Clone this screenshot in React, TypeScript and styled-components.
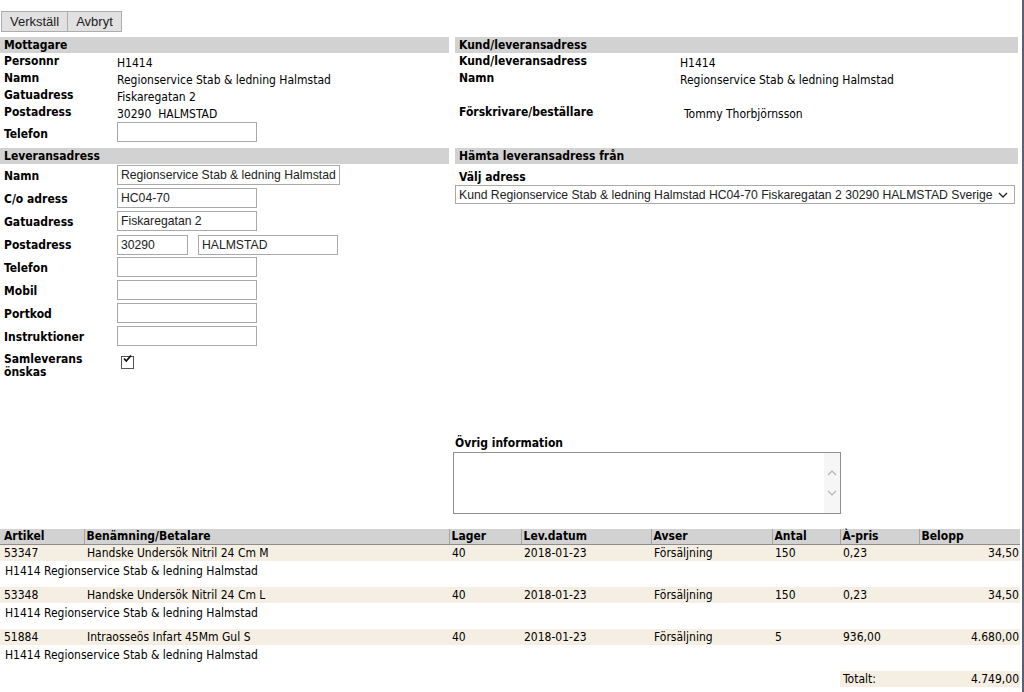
import styled, { createGlobalStyle } from 'styled-components';

const GlobalStyle = createGlobalStyle`
  html, body {
    margin: 0;
    padding: 0;
    background: #ffffff;
  }
  body {
    font-family: "DejaVu Sans Condensed", "DejaVu Sans", Tahoma, sans-serif;
    font-size: 12px;
    color: #000000;
  }
`;

const mottagare = [
  ['Personnr', 'H1414'],
  ['Namn', 'Regionservice Stab & ledning Halmstad'],
  ['Gatuadress', 'Fiskaregatan 2'],
  ['Postadress', '30290  HALMSTAD'],
];

const items = [
  { art: '53347', name: 'Handske Undersök Nitril 24 Cm M', lager: '40', datum: '2018-01-23', avser: 'Försäljning', antal: '150', pris: '0,23', belopp: '34,50' },
  { art: '53348', name: 'Handske Undersök Nitril 24 Cm L', lager: '40', datum: '2018-01-23', avser: 'Försäljning', antal: '150', pris: '0,23', belopp: '34,50' },
  { art: '51884', name: 'Intraosseös Infart 45Mm Gul S', lager: '40', datum: '2018-01-23', avser: 'Försäljning', antal: '5', pris: '936,00', belopp: '4.680,00' },
];

const columns = [
  { title: 'Artikel', width: 84 },
  { title: 'Benämning/Betalare', width: 365 },
  { title: 'Lager', width: 72 },
  { title: 'Lev.datum', width: 130 },
  { title: 'Avser', width: 121 },
  { title: 'Antal', width: 68 },
  { title: 'À-pris', width: 79 },
  { title: 'Belopp', width: 101 },
];

export default function App() {
  return (
    <Page>
      <GlobalStyle />
      <Toolbar>
        <Button>Verkställ</Button>
        <Button>Avbryt</Button>
      </Toolbar>

      <Columns>
        <Section>
          <SectionHead>Mottagare</SectionHead>
          <InfoGrid $label={117}>
            {mottagare.map(([label, value]) => (
              <InfoRow key={label}>
                <Label>{label}</Label>
                <Value>{value}</Value>
              </InfoRow>
            ))}
            <PhoneRow>
              <Label>Telefon</Label>
              <Input $w={140} />
            </PhoneRow>
          </InfoGrid>
        </Section>

        <Section>
          <SectionHead>Kund/leveransadress</SectionHead>
          <InfoGrid $label={225}>
            <InfoRow>
              <Label>Kund/leveransadress</Label>
              <Value>H1414</Value>
            </InfoRow>
            <InfoRow>
              <Label>Namn</Label>
              <Value>Regionservice Stab &amp; ledning Halmstad</Value>
            </InfoRow>
            <InfoRow>
              <Label />
              <Value />
            </InfoRow>
            <InfoRow>
              <Label>Förskrivare/beställare</Label>
              <Value $indent>Tommy Thorbjörnsson</Value>
            </InfoRow>
          </InfoGrid>
        </Section>

        <Section>
          <SectionHead>Leveransadress</SectionHead>
          <InfoGrid $label={117}>
            <FieldRow>
              <Label>Namn</Label>
              <Input $w={223} defaultValue="Regionservice Stab & ledning Halmstad" />
            </FieldRow>
            <FieldRow>
              <Label>C/o adress</Label>
              <Input $w={140} defaultValue="HC04-70" />
            </FieldRow>
            <FieldRow>
              <Label>Gatuadress</Label>
              <Input $w={140} defaultValue="Fiskaregatan 2" />
            </FieldRow>
            <FieldRow>
              <Label>Postadress</Label>
              <Pair>
                <Input $w={71} defaultValue="30290" />
                <Input $w={140} defaultValue="HALMSTAD" />
              </Pair>
            </FieldRow>
            <FieldRow>
              <Label>Telefon</Label>
              <Input $w={140} />
            </FieldRow>
            <FieldRow>
              <Label>Mobil</Label>
              <Input $w={140} />
            </FieldRow>
            <FieldRow>
              <Label>Portkod</Label>
              <Input $w={140} />
            </FieldRow>
            <FieldRow>
              <Label>Instruktioner</Label>
              <Input $w={140} />
            </FieldRow>
            <CheckRow>
              <Label $wrap>Samleverans önskas</Label>
              <CheckBox>
                <CheckInput type="checkbox" defaultChecked />
                <svg width="13" height="13" viewBox="0 0 13 13">
                  <path d="M3 6.5 L5.3 9 L10 3.5" fill="none" stroke="#111" strokeWidth="1.8" />
                </svg>
              </CheckBox>
            </CheckRow>
          </InfoGrid>
        </Section>

        <Section>
          <SectionHead>Hämta leveransadress från</SectionHead>
          <Stack>
            <Label>Välj adress</Label>
            <SelectWrap>
              <Select defaultValue="kund">
                <option value="kund">
                  Kund Regionservice Stab &amp; ledning Halmstad HC04-70 Fiskaregatan 2 30290 HALMSTAD Sverige
                </option>
              </Select>
              <svg width="10" height="6" viewBox="0 0 10 6">
                <path d="M1 1 L5 5 L9 1" fill="none" stroke="#222" strokeWidth="1.3" />
              </svg>
            </SelectWrap>
          </Stack>
        </Section>

        <Section />
        <OtherInfo>
          <Label>Övrig information</Label>
          <TextAreaWrap>
            <TextArea />
            <ScrollTrack>
              <svg width="10" height="6" viewBox="0 0 10 6">
                <path d="M1 5 L5 1 L9 5" fill="none" stroke="#b4b4b4" strokeWidth="1.2" />
              </svg>
              <svg width="10" height="6" viewBox="0 0 10 6">
                <path d="M1 1 L5 5 L9 1" fill="none" stroke="#b4b4b4" strokeWidth="1.2" />
              </svg>
            </ScrollTrack>
          </TextAreaWrap>
        </OtherInfo>
      </Columns>

      <Table>
        <colgroup>
          {columns.map((c) => (
            <col key={c.title} style={{ width: c.width }} />
          ))}
        </colgroup>
        <thead>
          <tr>
            {columns.map((c) => (
              <Th key={c.title}>{c.title}</Th>
            ))}
          </tr>
        </thead>
        <tbody>
          {items.map((it) => (
            <ItemGroup key={it.art}>
              <MainRow>
                <Td>{it.art}</Td>
                <Td>{it.name}</Td>
                <Td>{it.lager}</Td>
                <Td>{it.datum}</Td>
                <Td>{it.avser}</Td>
                <Td>{it.antal}</Td>
                <Td>{it.pris}</Td>
                <Td $right>{it.belopp}</Td>
              </MainRow>
              <tr>
                <PayerCell colSpan={8}>H1414 Regionservice Stab &amp; ledning Halmstad</PayerCell>
              </tr>
            </ItemGroup>
          ))}
          <tr>
            <Td colSpan={6} />
            <TotalCell>Totalt:</TotalCell>
            <TotalCell $right>4.749,00</TotalCell>
          </tr>
        </tbody>
      </Table>
    </Page>
  );
}

function ItemGroup({ children }: { children: React.ReactNode }) {
  return <>{children}</>;
}

const Page = styled.div`
  width: 1024px;
  min-height: 692px;
  box-sizing: border-box;
  border-right: 2px solid #5d6070;
  padding-top: 11px;
`;

const Toolbar = styled.div`
  display: flex;
  padding-left: 1px;
`;

const Button = styled.button`
  height: 21px;
  padding: 0 8px;
  margin: 0;
  margin-right: -1px;
  background: #e1e1e1;
  border: 1px solid #adadad;
  border-radius: 0;
  font-family: "Liberation Sans", Arial, sans-serif;
  font-size: 13px;
  color: #222;
`;

const Columns = styled.div`
  display: grid;
  grid-template-columns: 449px 563px;
  column-gap: 6px;
  margin-top: 5px;
  align-items: start;
`;

const Section = styled.div`
  display: flex;
  flex-direction: column;
`;

const SectionHead = styled.div`
  height: 16px;
  line-height: 16px;
  background: #d2d2d2;
  padding-left: 4px;
  font-weight: bold;
  font-size: 12px;
`;

const InfoGrid = styled.div<{ $label: number }>`
  display: grid;
  grid-template-columns: ${(p) => p.$label}px 1fr;
  padding-top: 1px;
`;

const InfoRow = styled.div`
  display: contents;
  & > * {
    height: 17px;
    line-height: 18px;
  }
`;

const FieldRow = styled.div`
  display: contents;
  & > * {
    height: 23px;
    display: flex;
    align-items: flex-start;
    padding-top: 1px;
    box-sizing: border-box;
  }
  & > ${() => Label} {
    line-height: 20px;
  }
`;

const PhoneRow = styled.div`
  display: contents;
  & > * {
    height: 26px;
    display: flex;
    align-items: flex-start;
    padding-top: 2px;
    box-sizing: border-box;
  }
  & > ${() => Label} {
    line-height: 20px;
  }
`;

const CheckRow = styled.div`
  display: contents;
  & > * {
    padding-top: 4px;
    height: 30px;
  }
`;

const Label = styled.div<{ $wrap?: boolean }>`
  padding-left: 4px;
  font-weight: bold;
  white-space: ${(p) => (p.$wrap ? 'normal' : 'nowrap')};
  line-height: ${(p) => (p.$wrap ? '13px' : 'inherit')};
  width: ${(p) => (p.$wrap ? '90px' : 'auto')};
`;

const Value = styled.div<{ $indent?: boolean }>`
  padding-left: ${(p) => (p.$indent ? 4 : 0)}px;
  white-space: pre;
`;

const Input = styled.input<{ $w: number }>`
  box-sizing: border-box;
  width: ${(p) => p.$w}px;
  height: 20px;
  margin: 0;
  padding: 0 3px;
  border: 1px solid #a9a9a9;
  border-radius: 0;
  font-family: "Liberation Sans", Arial, sans-serif;
  font-size: 12.2px;
  color: #222;
  outline: none;
`;

const Pair = styled.div`
  display: flex;
  gap: 10px;
`;

const CheckBox = styled.span`
  position: relative;
  width: 13px;
  height: 13px;
  margin-left: 4px;
  margin-top: 3px;
  svg {
    position: absolute;
    left: 0;
    top: 0;
    pointer-events: none;
  }
`;

const CheckInput = styled.input`
  appearance: none;
  box-sizing: border-box;
  width: 13px;
  height: 13px;
  margin: 0;
  border: 1px solid #555;
  background: #fff;
  display: block;
`;

const Stack = styled.div`
  display: flex;
  flex-direction: column;
  padding-top: 5px;
  ${Label} {
    line-height: 16px;
    height: 16px;
    margin-bottom: 0;
  }
`;

const SelectWrap = styled.div`
  position: relative;
  width: 560px;
  svg {
    position: absolute;
    right: 7px;
    top: 7px;
    pointer-events: none;
  }
`;

const Select = styled.select`
  appearance: none;
  box-sizing: border-box;
  width: 560px;
  height: 19px;
  margin: 0;
  padding: 0 18px 0 3px;
  border: 1px solid #a9a9a9;
  border-radius: 0;
  background: #fff;
  font-family: "Liberation Sans", Arial, sans-serif;
  font-size: 12.2px;
  color: #222;
`;

const OtherInfo = styled.div`
  display: flex;
  flex-direction: column;
  padding-top: 52px;
  ${Label} {
    padding-left: 0;
    height: 16px;
    line-height: 16px;
    margin-bottom: 1px;
  }
`;

const TextAreaWrap = styled.div`
  position: relative;
  width: 388px;
  height: 62px;
  margin-left: -2px;
`;

const TextArea = styled.textarea`
  box-sizing: border-box;
  display: block;
  width: 388px;
  height: 62px;
  margin: 0;
  padding: 2px 18px 2px 3px;
  border: 1px solid #8f8f8f;
  border-radius: 0;
  resize: none;
  overflow: hidden;
  font-family: "Liberation Sans", Arial, sans-serif;
  font-size: 13px;
`;

const ScrollTrack = styled.div`
  position: absolute;
  top: 1px;
  right: 1px;
  bottom: 1px;
  width: 16px;
  background: #f6f6f6;
  display: flex;
  flex-direction: column;
  justify-content: center;
  align-items: center;
  gap: 14px;
  pointer-events: none;
`;

const Table = styled.table`
  width: 1020px;
  margin-top: 15px;
  table-layout: fixed;
  border-collapse: collapse;
  border-spacing: 0;
`;

const Th = styled.th`
  height: 15px;
  line-height: 15px;
  padding: 0 0 0 2px;
  text-align: left;
  font-weight: bold;
  background: #d2d2d2;
  border-left: 1px solid #a4a4a4;
  border-bottom: 1px solid #8c8c8c;
  white-space: nowrap;
  &:first-child {
    border-left: none;
    padding-left: 4px;
  }
`;

const MainRow = styled.tr`
  background: #f5efe3;
`;

const Td = styled.td<{ $right?: boolean }>`
  height: 16px;
  line-height: 16px;
  padding: 0 1px 0 3px;
  text-align: ${(p) => (p.$right ? 'right' : 'left')};
  white-space: nowrap;
  &:first-child {
    padding-left: 4px;
  }
`;

const PayerCell = styled.td`
  padding: 3px 0 8px 5px;
  line-height: 15px;
  vertical-align: top;
`;

const TotalCell = styled(Td)`
  background: #f5efe3;
`;
